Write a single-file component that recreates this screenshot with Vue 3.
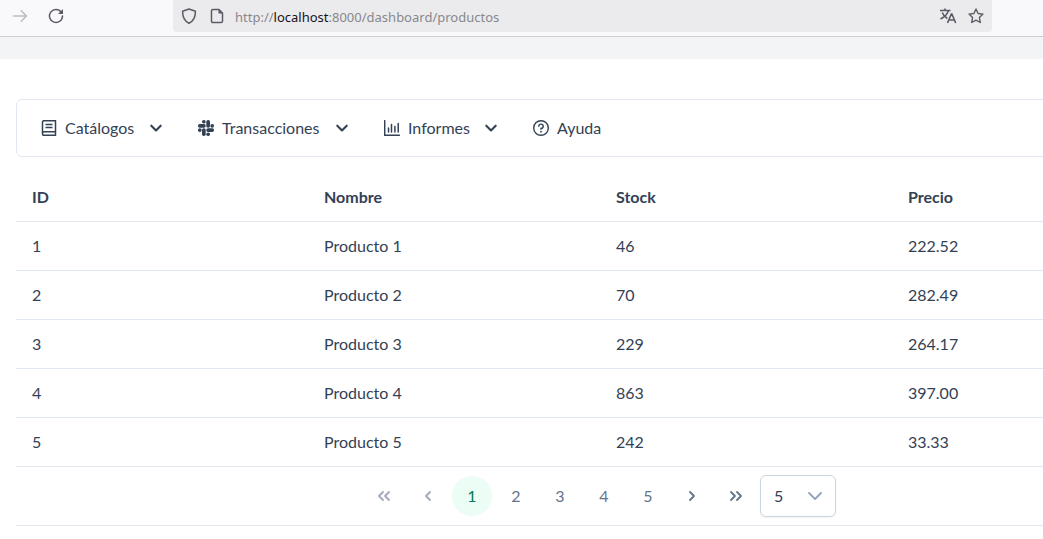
<script setup>
import { ref } from 'vue'

const url = ref('http://localhost:8000/dashboard/productos')
const page = ref(1)
const rows = ref('5')

const menu = [
  { label: 'Catálogos', icon: 'book', size: 'catalogs' },
  { label: 'Transacciones', icon: 'slack', size: 'transactions' },
  { label: 'Informes', icon: 'chart', size: 'reports' }
]

const products = [
  { id: 1, name: 'Producto 1', stock: 46, price: '222.52' },
  { id: 2, name: 'Producto 2', stock: 70, price: '282.49' },
  { id: 3, name: 'Producto 3', stock: 229, price: '264.17' },
  { id: 4, name: 'Producto 4', stock: 863, price: '397.00' },
  { id: 5, name: 'Producto 5', stock: 242, price: '33.33' }
]
</script>

<template>
  <div class="window">
    <header class="browser">
      <div class="nav-buttons">
        <button type="button" class="tool" aria-label="Adelante" disabled>
          <svg width="16" height="16" viewBox="0 0 16 16" fill="none" stroke="#bdbdc1" stroke-width="1.5" stroke-linecap="round" stroke-linejoin="round"><path d="M1.5 8h13M9.2 2.7 14.5 8l-5.3 5.3" /></svg>
        </button>
        <button type="button" class="tool" aria-label="Recargar">
          <svg width="16" height="16" viewBox="0 0 16 16" fill="none" stroke="#5b5b66" stroke-width="1.5" stroke-linecap="round"><path d="M13.3 4.2A6.5 6.5 0 1 0 14.5 8" /><path d="M15 1v5h-5z" fill="#5b5b66" stroke="none" /></svg>
        </button>
      </div>
      <div class="address">
        <svg width="16" height="16" viewBox="0 0 16 16" fill="none" stroke="#5b5b66" stroke-width="1.5" stroke-linejoin="round"><path d="M8 1 14.4 3.2C14.5 8.5 13 12.8 8 15.2 3 12.8 1.5 8.5 1.6 3.2z" /></svg>
        <svg class="file" width="16" height="16" viewBox="0 0 16 16" fill="none" stroke="#5b5b66" stroke-width="1.5" stroke-linejoin="round"><path d="M3.8 1.5H10l3.500 3.500v8.200a1.300 1.300 0 0 1-1.300 1.300H3.800a1.300 1.300 0 0 1-1.300-1.300V2.800a1.300 1.300 0 0 1 1.300-1.300z" /><path d="M9.500 1.200v4.300h4.300z" fill="#5b5b66" stroke="none" /></svg>
        <a class="url" :href="url">http://<span class="host">localhost</span>:8000/dashboard/productos</a>
        <button type="button" class="tool" aria-label="Traducir">
          <svg width="18" height="16" viewBox="0 0 18 16" fill="none" stroke="#5b5b66" stroke-width="1.6"><path d="M1 2.500h10.500M6 .5v2M9.500 2.500C8.500 6 5.500 9 1.500 11M3.200 4.500C4.200 7 6 9 8.300 10.500M8.500 15l3.800-9h.6l3.800 9M10 12h5.500" /></svg>
        </button>
        <button type="button" class="tool" aria-label="Guardar en marcadores">
          <svg width="16" height="16" viewBox="0 0 16 16" fill="none" stroke="#5b5b66" stroke-width="1.4" stroke-linejoin="round"><path d="m8 1 2.100 4.500 4.900.6-3.600 3.400.9 5L8 12.100l-4.300 2.400.9-5L1 6.100l4.900-.6z" /></svg>
        </button>
      </div>
    </header>
    <div class="strip"></div>

    <main class="content">
      <nav class="menubar" aria-label="Principal">
        <button v-for="item in menu" :key="item.label" type="button" class="menu-item" :class="item.size">
          <svg v-if="item.icon === 'book'" width="16" height="16" viewBox="0 0 16 16" fill="none" stroke="currentColor" stroke-width="1.500"><path d="M14.500.7H3A1.500 1.500 0 0 0 1.500 2.200v11.600A1.500 1.500 0 0 0 3 15.300h11.500z" stroke-linejoin="round" /><path d="M1.500 12.800Q1.800 11.700 3 11.700h11.500M4.500 4.500h7M4.500 7.500h7" /></svg>
          <svg v-else-if="item.icon === 'slack'" width="16" height="16" viewBox="0 0 16 16" fill="currentColor">
            <rect x="4" y="0" width="3.700" height="3.500" rx="1.700" /><rect x="0" y="4" width="7.700" height="3.700" rx="1.700" />
            <rect x="12.400" y="4" width="3.600" height="3.700" rx="1.700" /><rect x="8.300" y="0" width="3.700" height="7.700" rx="1.700" />
            <rect x="8.300" y="12.500" width="3.700" height="3.500" rx="1.700" /><rect x="8.300" y="8.300" width="7.700" height="3.700" rx="1.700" />
            <rect x="0" y="8.300" width="3.600" height="3.700" rx="1.700" /><rect x="4" y="8.300" width="3.700" height="7.700" rx="1.700" />
          </svg>
          <svg v-else width="16" height="16" viewBox="0 0 16 16" fill="none" stroke="currentColor" stroke-width="1.500" stroke-linecap="round" stroke-linejoin="round"><path d="M.7.700v14.600h14.600M4.500 8v4M7.500 4.500V12M10.900 6.500V12M14.200 3.500V12" /></svg>
          <span class="label">{{ item.label }}</span>
          <svg class="caret" width="14" height="14" viewBox="0 0 14 14" fill="none" stroke="currentColor" stroke-width="2.100" stroke-linecap="round" stroke-linejoin="round"><path d="m2.300 4.700 4.700 4.700 4.700-4.700" /></svg>
        </button>
        <a class="menu-item" href="#ayuda">
          <svg width="16" height="16" viewBox="0 0 16 16" fill="none" stroke="currentColor" stroke-width="1.400" stroke-linecap="round"><circle cx="8" cy="8" r="7.300" /><path d="M5.800 6.200A2.200 2.200 0 1 1 8 8.500v.8" /><circle cx="8" cy="11.700" r=".9" fill="currentColor" stroke="none" /></svg>
          <span class="label">Ayuda</span>
        </a>
      </nav>

      <table class="products">
        <thead>
          <tr><th scope="col">ID</th><th scope="col">Nombre</th><th scope="col">Stock</th><th scope="col">Precio</th></tr>
        </thead>
        <tbody>
          <tr v-for="p in products" :key="p.id">
            <td>{{ p.id }}</td><td>{{ p.name }}</td><td>{{ p.stock }}</td><td>{{ p.price }}</td>
          </tr>
        </tbody>
      </table>

      <nav class="paginator" aria-label="Paginación">
        <button type="button" class="page" aria-label="Primera página" :disabled="page === 1" @click="page = 1">
          <svg width="14" height="14" viewBox="0 0 14 14"><path d="M6 3 2 7l4 4M12 3 8 7l4 4" /></svg>
        </button>
        <button type="button" class="page" aria-label="Página anterior" :disabled="page === 1" @click="page--">
          <svg width="14" height="14" viewBox="0 0 14 14"><path d="M9 3 5 7l4 4" /></svg>
        </button>
        <button v-for="n in 5" :key="n" type="button" class="page" :class="{ active: n === page }" @click="page = n">{{ n }}</button>
        <button type="button" class="page" aria-label="Página siguiente" :disabled="page === 5" @click="page++">
          <svg width="14" height="14" viewBox="0 0 14 14"><path d="m5 3 4 4-4 4" /></svg>
        </button>
        <button type="button" class="page" aria-label="Última página" :disabled="page === 5" @click="page = 5">
          <svg width="14" height="14" viewBox="0 0 14 14"><path d="m2 3 4 4-4 4M8 3l4 4-4 4" /></svg>
        </button>
        <div class="rows">
          <select v-model="rows" aria-label="Filas por página">
            <option>5</option>
            <option>10</option>
            <option>20</option>
          </select>
          <svg width="14" height="14" viewBox="0 0 14 14"><path d="m1 4 6 6 6-6" /></svg>
        </div>
      </nav>
    </main>
  </div>
</template>

<style>
body {
  background: #fff;
}
</style>

<style scoped>
* {
  box-sizing: border-box;
}
.window {
  overflow: hidden;
  color: #334155;
  font: 16px/24px Lato, "Open Sans", sans-serif;
}
button {
  border: 0;
  background: none;
  padding: 0;
  font: inherit;
  color: inherit;
}
svg {
  display: block;
  flex: none;
}
.browser {
  display: flex;
  align-items: flex-start;
  height: 37px;
  padding-right: 51px;
  background: #f9f9fb;
  border-bottom: 1px solid #cccccf;
}
.nav-buttons {
  display: flex;
  gap: 20px;
  flex: 0 0 173px;
  padding: 8px 12px;
}
.address {
  display: flex;
  align-items: center;
  flex: 1;
  height: 32px;
  padding: 0 8px;
  background: #ebebed;
  border-radius: 0 0 4px 4px;
}
.file {
  margin: 0 10px 0 12px;
}
.url {
  flex: 1;
  padding-top: 2px;
  color: #88888c;
  font: 13px/20px "Noto Sans", sans-serif;
  text-decoration: none;
}
.host {
  color: #15141a;
}
.address .tool + .tool {
  margin-left: 11px;
}
.strip {
  height: 22px;
  background: #f3f4f6;
}
.content {
  min-width: 1200px;
  padding: 40px 16px 0;
}
.menubar {
  display: flex;
  align-items: center;
  height: 58px;
  padding: 0 24px;
  border: 1px solid #e2e8f0;
  border-radius: 6px;
}
.menu-item {
  display: flex;
  align-items: center;
  height: 40px;
  color: inherit;
  text-decoration: none;
}
.label {
  margin-left: 8px;
}
.caret {
  margin-left: auto;
}
.catalogs {
  width: 122px;
  margin-right: 35px;
}
.transactions {
  width: 151px;
  margin-right: 35px;
}
.reports {
  width: 114px;
  margin-right: 35px;
}
.products {
  width: 100%;
  margin-top: 16px;
  table-layout: fixed;
  border-collapse: separate;
  border-spacing: 0;
}
.products th,
.products td {
  padding: 12px 16px;
  border-bottom: 1px solid #e2e8f0;
  text-align: left;
}
.products th {
  font-weight: 700;
}
.paginator {
  display: flex;
  align-items: center;
  justify-content: center;
  gap: 4px;
  padding: 8px 0;
  border-bottom: 1px solid #e2e8f0;
}
.page {
  display: flex;
  align-items: center;
  justify-content: center;
  width: 40px;
  height: 40px;
  border-radius: 50%;
  color: #64748b;
}
.page:disabled {
  opacity: 0.6;
}
.page svg,
.rows svg {
  fill: none;
  stroke: currentColor;
  stroke-width: 1.8;
  stroke-linecap: round;
  stroke-linejoin: round;
}
.active {
  background: #ecfdf5;
  color: #047857;
}
.rows {
  position: relative;
  color: #94a3b8;
}
.rows select {
  display: block;
  width: 76px;
  height: 42px;
  padding: 0 13px;
  appearance: none;
  border: 1px solid #cbd5e1;
  border-radius: 6px;
  background: #fff;
  box-shadow: 0 1px 2px rgba(18, 18, 23, 0.05);
  color: #334155;
  font: inherit;
}
.rows svg {
  position: absolute;
  top: 14px;
  right: 14px;
  pointer-events: none;
}
</style>
